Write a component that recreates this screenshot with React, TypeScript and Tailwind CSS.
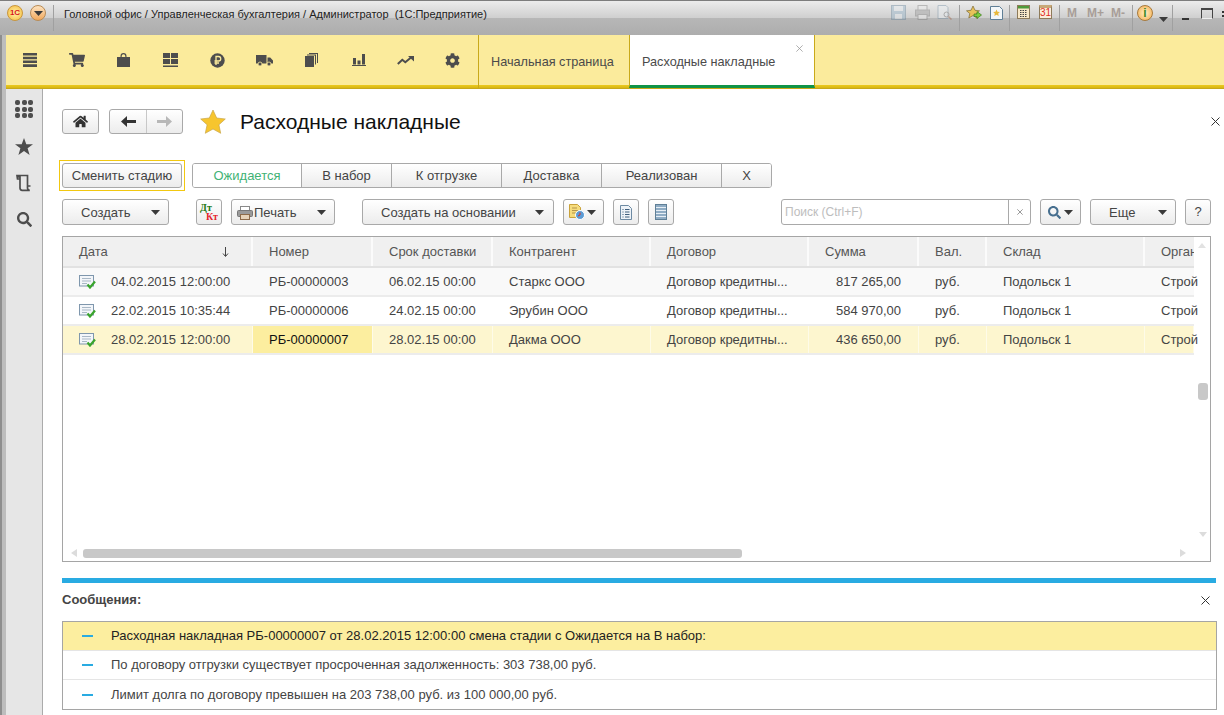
import type { ReactNode } from 'react';
import { FaCog, FaHome, FaSearch, FaShoppingCart } from 'react-icons/fa';

const COLUMNS = [
  { title: 'Дата', width: 'w-[190px]' },
  { title: 'Номер', width: 'w-[120px]' },
  { title: 'Срок доставки', width: 'w-[120px]' },
  { title: 'Контрагент', width: 'w-[158px]' },
  { title: 'Договор', width: 'w-[158px]' },
  { title: 'Сумма', width: 'w-[110px]' },
  { title: 'Вал.', width: 'w-[68px]' },
  { title: 'Склад', width: 'w-[158px]' },
  { title: 'Организация', width: 'w-[49px]' },
];

const ROWS = [
  ['04.02.2015 12:00:00', 'РБ-00000003', '06.02.15 00:00', 'Старкс ООО', 'Договор кредитны...', '817 265,00', 'руб.', 'Подольск 1', 'Строй'],
  ['22.02.2015 10:35:44', 'РБ-00000006', '24.02.15 00:00', 'Эрубин ООО', 'Договор кредитны...', '584 970,00', 'руб.', 'Подольск 1', 'Строй'],
  ['28.02.2015 12:00:00', 'РБ-00000007', '28.02.15 00:00', 'Дакма ООО', 'Договор кредитны...', '436 650,00', 'руб.', 'Подольск 1', 'Строй'],
];

const STAGES = [
  { title: 'Ожидается', width: 'w-[109px]' },
  { title: 'В набор', width: 'w-[90px]' },
  { title: 'К отгрузке', width: 'w-[110px]' },
  { title: 'Доставка', width: 'w-[100px]' },
  { title: 'Реализован', width: 'w-[120px]' },
  { title: 'Х', width: 'w-[49px]' },
];

const MESSAGES = [
  'Расходная накладная РБ-00000007 от 28.02.2015 12:00:00 смена стадии с Ожидается на В набор:',
  'По договору отгрузки существует просроченная задолженность: 303 738,00 руб.',
  'Лимит долга по договору превышен на 203 738,00 руб. из 100 000,00 руб.',
];

const btn =
  'flex items-center rounded-[3px] border border-[#a9a9a9] bg-gradient-to-b from-white to-[#ececec] text-[#444]';

const frame = 'bg-[linear-gradient(90deg,#8e8e8e_2px,#bdbdbd_2px)]';

function Caret({ className = '' }: { className?: string }) {
  return (
    <svg width="9" height="5" viewBox="0 0 9 5" className={className}>
      <path d="M0 0h9L4.5 5z" fill="#3a3a3a" />
    </svg>
  );
}

function Close({ size = 9, color = '#444' }: { size?: number; color?: string }) {
  return (
    <svg width={size} height={size} viewBox="0 0 9 9">
      <path d="M.5.5l8 8M8.5.5l-8 8" stroke={color} strokeWidth="1" fill="none" />
    </svg>
  );
}

function MenuIcon({ children, label }: { children: ReactNode; label: string }) {
  return (
    <div title={label} className="flex h-[50px] w-[47px] items-center justify-center text-[#4d4d4d]">
      {children}
    </div>
  );
}

function Divider() {
  return <div className="mx-[4px] h-[26px] w-[1px] self-start bg-[#a0a0a0]" />;
}

function DocCheck() {
  return (
    <svg width="17" height="14" viewBox="0 0 17 14">
      <rect x="0.5" y="0.5" width="14" height="10.5" fill="#f3f6fa" stroke="#7f97ad" />
      <path d="M3 3.5h9M3 6h9M3 8.5h5" stroke="#a9b8c6" />
      <path d="M8.5 9.5l2.5 3 5-6" stroke="#3aa52c" strokeWidth="2.2" fill="none" />
    </svg>
  );
}

function TitleBar() {
  return (
    <div className="flex h-[35px] shrink-0 border-t border-[#7d7d7d] bg-[linear-gradient(#ececec_0%,#cfcfcf_50%,#b7b7b7_51%,#adadad_100%)] pt-[4px]">
      <div className="ml-[7px] flex h-[16px] w-[16px] items-center justify-center rounded-full border border-[#c9963c] bg-[radial-gradient(circle,#fff3a8,#f5b93c)] text-[8px] font-bold leading-none text-[#d8141c]">
        1С
      </div>
      <div className="ml-[7px] flex h-[16px] w-[16px] items-center justify-center rounded-full border border-[#b98b55] bg-gradient-to-b from-[#fde3bf] to-[#f0a85a]">
        <Caret />
      </div>
      <div className="ml-[7px] h-[26px] w-[1px] bg-[#a0a0a0]" />
      <div className="ml-[10px] whitespace-pre pt-[1px] text-[11px] leading-[16px] text-[#222]">
        Головной офис / Управленческая бухгалтерия / Администратор  (1С:Предприятие)
      </div>
      <div className="ml-auto flex h-[18px] items-start">
        <div className="flex items-center pr-[3px] opacity-40">
          <svg width="15" height="15" viewBox="0 0 15 15">
            <rect x="0.5" y="0.5" width="14" height="14" fill="#8fb1c9" stroke="#5f7f96" />
            <rect x="3" y="1" width="9" height="5" fill="#e8eef3" />
            <rect x="4" y="9" width="7" height="5" fill="#e8eef3" />
          </svg>
          <svg width="15" height="15" viewBox="0 0 15 15" className="ml-[9px]">
            <rect x="3" y="0.5" width="9" height="5" fill="#eee" stroke="#777" />
            <rect x="0.5" y="5" width="14" height="6" fill="#999" stroke="#777" />
            <rect x="3" y="9.5" width="9" height="5" fill="#eee" stroke="#777" />
          </svg>
          <svg width="15" height="15" viewBox="0 0 15 15" className="ml-[7px]">
            <path d="M1 .5h8l2 2v11H1z" fill="#eef3f7" stroke="#6f8ba1" />
            <circle cx="9.5" cy="9.5" r="2.5" fill="none" stroke="#666" />
            <path d="M11.5 11.5l3 3" stroke="#a05a3a" strokeWidth="1.5" />
          </svg>
        </div>
        <Divider />
        <div className="flex items-center gap-[8px] px-[2px]">
          <svg width="16" height="16" viewBox="0 0 16 16">
            <path d="M7 1l2 4.3 4.5.5-3.3 3 1 4.5L7 10.5 2.8 13l1-4.5L.5 5.8 5 5.300z" fill="#e8c25a" stroke="#7d6a33" strokeWidth=".7" />
            <path d="M8 9h3V6.500L15.500 10 11 13.500V11.500H8z" fill="#7ccc3c" stroke="#3b7d1c" strokeWidth=".7" />
          </svg>
          <svg width="13" height="14" viewBox="0 0 13 14">
            <path d="M.5.5h9l3 3v10H.5z" fill="#f3f7fa" stroke="#5f7f96" />
            <path d="M6.500 3.500l1 2.200 2.400.3-1.700 1.600.5 2.400-2.200-1.200L4.300 10l.5-2.400L3.100 6l2.400-.3z" fill="#e8b93c" />
          </svg>
        </div>
        <Divider />
        <div className="flex items-center gap-[9px] px-[3px]">
          <svg width="13" height="14" viewBox="0 0 13 14">
            <rect x="0.5" y="0.500" width="12" height="13" fill="#f8e8c8" stroke="#8d7a5a" />
            <rect x="1" y="1" width="11" height="2.500" fill="#4e9a3a" />
            <path d="M3 5.500h7M3 7.500h7M3 9.500h7M3 11.500h7" stroke="#444" strokeDasharray="1.500 1" />
          </svg>
          <div className="flex h-[14px] w-[13px] items-end justify-center border border-[#8d7a5a] border-t-[3px] border-t-[#c8a878] bg-[#fbeedd] text-[10px] leading-[11px] text-[#e0301e]">
            31
          </div>
        </div>
        <Divider />
        <div className="mt-[1px] flex items-center px-[3px] text-[12px] font-bold leading-[15px] text-[#a89e98]">
          <span>M</span>
          <span className="ml-[10px]">M+</span>
          <span className="ml-[7px]">M-</span>
        </div>
        <Divider />
        <div className="flex h-[16px] w-[16px] items-center justify-center rounded-full border border-[#a87a3c] bg-[radial-gradient(circle,#fff2c8,#f3a94a)] text-[12px] font-bold leading-none text-[#3c8a28]">
          i
        </div>
        <Caret className="ml-[6px] mt-[12px]" />
        <Divider />
        <div className="ml-[5px] mt-[13px] h-[2px] w-[7px] bg-[#333]" />
        <div className="ml-[12px] mt-[3px] h-[11px] w-[12px] border border-t-2 border-[#444] border-b-[#eee]" />
        <div className="ml-[9px] w-[2px] pt-[6px] text-[#333]">
          <div className="h-[2px] w-[2px] bg-[#333]" />
          <div className="mt-[2px] h-[2px] w-[2px] bg-[#333]" />
        </div>
      </div>
    </div>
  );
}

function SectionBar() {
  return (
    <div className={`flex h-[54px] shrink-0 pl-[6px] ${frame}`}>
      <div className="flex flex-1 border-b border-[#c7a81a] bg-[linear-gradient(#fbeb9c_0,#fbeb9c_50px,#ecca1e_50px,#d6b614_53px)]">
        <MenuIcon label="menu">
          <svg width="14" height="14" viewBox="0 0 14 14" fill="currentColor">
            <path d="M0 0h14v2.500H0zM0 3.700h14v2.500H0zM0 7.500h14V10H0zM0 11.300h14V14H0z" />
          </svg>
        </MenuIcon>
        <MenuIcon label="cart">
          <FaShoppingCart size={16} />
        </MenuIcon>
        <MenuIcon label="bag">
          <svg width="13" height="14" viewBox="0 0 13 14" fill="currentColor">
            <path fillRule="evenodd" d="M0 4h3.500V3a3 3 0 0 1 6 0v1H13v10H0zM4.700 4h3.600V3a1.800 1.800 0 0 0-3.600 0z" />
          </svg>
        </MenuIcon>
        <MenuIcon label="grid">
          <svg width="15" height="14" viewBox="0 0 15 14" fill="currentColor">
            <path d="M0 0h7v5H0zM8 0h7v5H8zM0 6h7v5H0zM8 6h7v5H8zM0 12.500h15V14H0z" />
          </svg>
        </MenuIcon>
        <MenuIcon label="money">
          <svg width="15" height="15" viewBox="0 0 15 15">
            <circle cx="7.500" cy="7.500" r="7.200" fill="currentColor" />
            <path d="M6 12V3.500h2.500a2 2 0 0 1 0 4.500H4.500M4.500 10H9" stroke="#fbeb9c" strokeWidth="1.300" fill="none" />
          </svg>
        </MenuIcon>
        <MenuIcon label="truck">
          <svg width="17" height="11" viewBox="0 0 17 11" fill="currentColor">
            <path d="M0 0h10.500v8.500H0zM11.500 2.500h2.700L17 5.500v3h-5.500z" />
            <circle cx="4" cy="9" r="2" stroke="#fbeb9c" strokeWidth=".8" />
            <circle cx="13" cy="9" r="2" stroke="#fbeb9c" strokeWidth=".8" />
          </svg>
        </MenuIcon>
        <MenuIcon label="pages">
          <svg width="13" height="14" viewBox="0 0 13 14" fill="currentColor">
            <path d="M0 3h9v11H0zM2 1.500h9v10h-1V2.500H2zM4 0h9v10h-1V1H4z" />
          </svg>
        </MenuIcon>
        <MenuIcon label="bars">
          <svg width="14" height="12" viewBox="0 0 14 12" fill="currentColor">
            <path d="M1 4h3v6.500H1zM5.500 6.500h3v4h-3zM10 0h3v10.500h-3zM0 11h14v1H0z" />
          </svg>
        </MenuIcon>
        <MenuIcon label="trend">
          <svg width="17" height="9" viewBox="0 0 17 9">
            <path d="M.8 8l4.500-4.200 3 2.400L14 1.500" stroke="currentColor" strokeWidth="2" fill="none" />
            <path d="M11 0h6v5.500z" fill="currentColor" />
          </svg>
        </MenuIcon>
        <MenuIcon label="settings">
          <FaCog size={15} />
        </MenuIcon>
        <div className="ml-[2px] flex h-[53px] w-[151px] items-start border-l border-[#c9a91a] pl-[12px] pt-[19px] text-[12.7px] leading-[16px] text-[#4a4a4a]">
          Начальная страница
        </div>
        <div className="relative flex h-[53px] w-[186px] items-start border-x border-[#c9a91a] border-b-[3px] border-b-[#0f9347] bg-white pl-[12px] pt-[19px] text-[12.7px] leading-[16px] text-[#4a4a4a]">
          Расходные накладные
          <div className="absolute right-[11px] top-[10px]">
            <Close size={7} color="#999" />
          </div>
        </div>
      </div>
    </div>
  );
}

function Sidebar() {
  return (
    <div className={`flex w-[43px] shrink-0 pl-[6px] ${frame}`}>
      <div className="flex w-[37px] flex-col items-center border-r border-[#ababab] bg-[#e6e6e6] pt-[11px] text-[#4d4d4d]">
        <div className="grid h-[17px] grid-cols-3 gap-[1.500px]">
          {[0, 1, 2, 3, 4, 5, 6, 7, 8].map((i) => (
            <div key={i} className="h-[5px] w-[5px] rounded-[2px] bg-[#4d4d4d]" />
          ))}
        </div>
        <svg width="18" height="17" viewBox="0 0 18 17" fill="currentColor" className="mt-[21px]">
          <path d="M9 0l2.300 6.300H18l-5.400 4 2 6.700L9 13l-5.600 4 2-6.700L0 6.300h6.700z" />
        </svg>
        <svg width="16" height="18" viewBox="0 0 16 18" className="mt-[19px]">
          <path d="M1.500 3h2.500M4 1.500h7.500V14a2.300 2.300 0 0 0 2.300 2.300H6.200A2.300 2.300 0 0 1 4 14zM1 1.500h3V5H1.500zM11.500 12h3" stroke="currentColor" strokeWidth="1.700" fill="none" />
        </svg>
        <FaSearch size={15} className="mt-[20px]" />
      </div>
    </div>
  );
}

function StageBar() {
  return (
    <div className="mt-[26px] flex items-center">
      <div className="-ml-[3px] border border-[#f2c811] p-[2px]">
        <div className={`${btn} h-[25px] w-[120px] justify-center`}>Сменить стадию</div>
      </div>
      <div className="ml-[7px] flex h-[25px] w-[580px] overflow-hidden rounded-[3px] border border-[#a9a9a9]">
        {STAGES.map((s, i) => (
          <div
            key={s.title}
            className={`flex shrink-0 items-center justify-center border-r border-[#a9a9a9] last:border-r-0 ${s.width} ${
              i === 0 ? 'bg-white text-[#3fb275]' : 'bg-gradient-to-b from-white to-[#ececec] text-[#444]'
            }`}
          >
            {s.title}
          </div>
        ))}
      </div>
    </div>
  );
}

function Toolbar() {
  return (
    <div className="mt-[8px] flex h-[26px] items-stretch">
      <div className={`${btn} w-[107px] pl-[18px] pt-[1px]`}>
        Создать
        <Caret className="ml-auto mr-[8px]" />
      </div>
      <div className={`${btn} ml-[27px] w-[26px] flex-col !items-stretch px-[3px] pt-[3px] font-['Liberation_Serif',serif] text-[10px] font-bold leading-[9px]`}>
        <span className="text-left text-[#237a12]">Дт</span>
        <span className="text-right text-[#e5232b]">Кт</span>
      </div>
      <div className={`${btn} ml-[9px] w-[104px] pl-[5px] pt-[1px]`}>
        <svg width="16" height="14" viewBox="0 0 16 14" className="mr-[1px]">
          <rect x="3.500" y="0.500" width="9" height="5" fill="#fff" stroke="#888" />
          <rect x="0.500" y="4.500" width="15" height="6" rx="1" fill="#9a9a9a" stroke="#777" />
          <rect x="3.500" y="8.500" width="9" height="5" fill="#e6d2b8" stroke="#8d6b4a" />
        </svg>
        Печать
        <Caret className="ml-auto mr-[8px]" />
      </div>
      <div className={`${btn} ml-[27px] w-[192px] pl-[18px] pt-[1px]`}>
        Создать на основании
        <Caret className="ml-auto mr-[9px]" />
      </div>
      <div className={`${btn} ml-[9px] w-[41px] pl-[5px]`}>
        <svg width="16" height="16" viewBox="0 0 16 16">
          <path d="M.5.5h8l3 3v10H.5z" fill="#f6dc7c" stroke="#c9a23c" />
          <path d="M3 4h5M3 6.500h6M3 9h4" stroke="#b5954a" />
          <circle cx="11" cy="11" r="4.500" fill="#5b9bd5" stroke="#fff" />
          <path d="M11 8.500V11l-2 1" stroke="#e0301e" fill="none" />
        </svg>
        <Caret className="ml-[2px]" />
      </div>
      <div className={`${btn} ml-[9px] w-[26px] justify-center`}>
        <svg width="12" height="15" viewBox="0 0 12 15">
          <path d="M.5.5h8l3 3v11H.5z" fill="#eef3f8" stroke="#6d8aa3" />
          <path d="M2.500 4.500h1M5 4.500h4.500M2.500 7h1M5 7h4.500M2.500 9.500h1M5 9.500h4.500M2.500 12h1M5 12h4.500" stroke="#3f5f7d" />
        </svg>
      </div>
      <div className={`${btn} ml-[9px] w-[26px] justify-center`}>
        <svg width="12" height="16" viewBox="0 0 12 16">
          <rect x="0.500" y="0.500" width="11" height="15" fill="#8facc4" stroke="#5f7f96" />
          <path d="M1 3.500h10M1 6.500h10M1 9.500h10M1 12.500h10" stroke="#e6eef5" />
        </svg>
      </div>
      <div className="ml-[107px] flex w-[250px] items-stretch rounded-[3px] border border-[#a9a9a9] bg-white">
        <div className="flex-1 pl-[3px] pt-[4px] text-[12px] leading-[16px] text-[#bdbdbd]">Поиск (Ctrl+F)</div>
        <div className="flex w-[22px] items-center justify-center border-l border-[#a9a9a9]">
          <Close size={6} color="#666" />
        </div>
      </div>
      <div className={`${btn} ml-[9px] w-[41px] pl-[7px] !text-[#476f8f]`}>
        <FaSearch size={13} />
        <Caret className="ml-[3px]" />
      </div>
      <div className={`${btn} ml-[9px] w-[86px] pl-[18px] pt-[1px]`}>
        Еще
        <Caret className="ml-auto mr-[8px]" />
      </div>
      <div className={`${btn} ml-[9px] w-[26px] justify-center`}>?</div>
    </div>
  );
}

function DataTable() {
  return (
    <div className="relative mt-[11px] h-[326px] w-[1149px] overflow-hidden border border-[#a5a5a5] bg-white">
      <div className="flex h-[31px] w-[1131px] border-b-2 border-[#e2e2e2] bg-[#f0f0f0]">
        {COLUMNS.map((c, i) => (
          <div
            key={c.title}
            className={`flex shrink-0 items-center overflow-hidden whitespace-nowrap pl-[16px] last:border-r-0 ${c.width} ${
              i === 0 ? 'pr-[22px]' : ''
            } border-r-2 border-[#fbfbfb] text-[#555]`}
          >
            {c.title}
            {i === 0 && (
              <svg width="7" height="10" viewBox="0 0 7 10" className="ml-auto">
                <path d="M3.500 0v9M1 6.500l2.500 3 2.500-3" stroke="#444" fill="none" />
              </svg>
            )}
          </div>
        ))}
      </div>
      {ROWS.map((row, r) => (
        <div
          key={row[1]}
          className={`flex h-[29px] w-[1131px] border-b-2 border-[#ececec] ${
            r === 2 ? 'bg-[#fdf6cf]' : r === 0 ? 'bg-[#f9f9f9]' : 'bg-white'
          }`}
        >
          {row.map((cell, c) => (
            <div
              key={c}
              className={`flex shrink-0 items-center whitespace-nowrap border-r border-transparent ${COLUMNS[c].width} ${
                c === 5 ? 'justify-end pr-[17px]' : 'pl-[16px]'
              } ${r === 2 && c === 1 ? 'bg-[#fcee9f] text-[#111]' : 'text-[#444]'} ${r === 2 ? 'border-r-[#fefbe8]' : ''}`}
            >
              {c === 0 && (
                <span className="mr-[15px] flex">
                  <DocCheck />
                </span>
              )}
              {cell}
            </div>
          ))}
        </div>
      ))}
      {/* scrollbars lie over the grid */}
      <div className="absolute left-[1135px] top-[146px] h-[17px] w-[10px] rounded-[3px] bg-[#c8c8c8]" />
      <div className="absolute left-[20px] top-[312px] h-[9px] w-[659px] rounded-[3px] bg-[#c8c8c8]" />
      <svg width="6" height="8" viewBox="0 0 6 8" className="absolute left-[8px] top-[312px]">
        <path d="M6 0v8L0 4z" fill="#dcdcdc" />
      </svg>
      <svg width="6" height="8" viewBox="0 0 6 8" className="absolute left-[1117px] top-[312px]">
        <path d="M0 0v8l6-4z" fill="#dcdcdc" />
      </svg>
      <svg width="8" height="5" viewBox="0 0 8 5" className="absolute left-[1135px] top-[6px]">
        <path d="M0 5h8L4 0z" fill="#e2e2e2" />
      </svg>
      <svg width="8" height="5" viewBox="0 0 8 5" className="absolute left-[1136px] top-[295px]">
        <path d="M0 0h8L4 5z" fill="#dcdcdc" />
      </svg>
    </div>
  );
}

function Messages() {
  return (
    <>
      <div className="mt-[16px] h-[5px] w-[1154px] bg-[#29abe2]" />
      <div className="flex h-[38px] w-[1148px] items-center justify-between pb-[4px]">
        <span className="font-bold text-[#444]">Сообщения:</span>
        <Close size={9} color="#333" />
      </div>
      <div className="w-[1155px] border border-[#a5a5a5] bg-white">
        {MESSAGES.map((m, i) => (
          <div
            key={m}
            className={`flex h-[29px] items-center border-b border-[#e5e5e5] pl-[19px] last:border-b-0 ${
              i === 0 ? 'bg-[#fcee9f] text-[#222]' : 'text-[#444]'
            }`}
          >
            <div className="mr-[18px] h-[2px] w-[11px] bg-[#29abe2]" />
            {m}
          </div>
        ))}
      </div>
    </>
  );
}

export default function App() {
  return (
    <div className="flex h-[715px] w-[1224px] flex-col overflow-hidden bg-white font-['Liberation_Sans',Arial,sans-serif] text-[13px]">
      <TitleBar />
      <SectionBar />
      <div className="flex min-h-0 flex-1">
        <Sidebar />
        <div className="flex-1 pl-[19px]">
          {/* header row */}
          <div className="mt-[20px] flex h-[25px] items-center">
            <div className={`${btn} h-[25px] w-[37px] justify-center !text-[#333]`}>
              <FaHome size={15} />
            </div>
            <div className={`${btn} ml-[10px] h-[25px] w-[74px]`}>
              <div className="flex h-full w-[37px] items-center justify-center border-r border-[#c8c8c8]">
                <svg width="15" height="11" viewBox="0 0 15 11" fill="#333">
                  <path d="M6 0v4h9v3H6v4L0 5.500z" />
                </svg>
              </div>
              <div className="flex flex-1 items-center justify-center">
                <svg width="15" height="11" viewBox="0 0 15 11" fill="#b8b8b8">
                  <path d="M9 0v4H0v3h9v4l6-5.500z" />
                </svg>
              </div>
            </div>
            <svg width="26" height="25" viewBox="0 0 26 25" className="ml-[17px]">
              <path d="M13 1l3.700 8 8.600 1-6.400 5.800 1.800 8.500L13 20l-7.700 4.300 1.800-8.500L.7 10l8.600-1z" fill="#f7c52e" stroke="#c9a64a" strokeWidth=".7" />
            </svg>
            <h1 className="ml-[14px] text-[21px] font-normal text-[#111]">Расходные накладные</h1>
            <div className="ml-auto mr-[4px]">
              <Close size={9} color="#333" />
            </div>
          </div>
          <StageBar />
          <Toolbar />
          <DataTable />
          <Messages />
        </div>
      </div>
    </div>
  );
}
